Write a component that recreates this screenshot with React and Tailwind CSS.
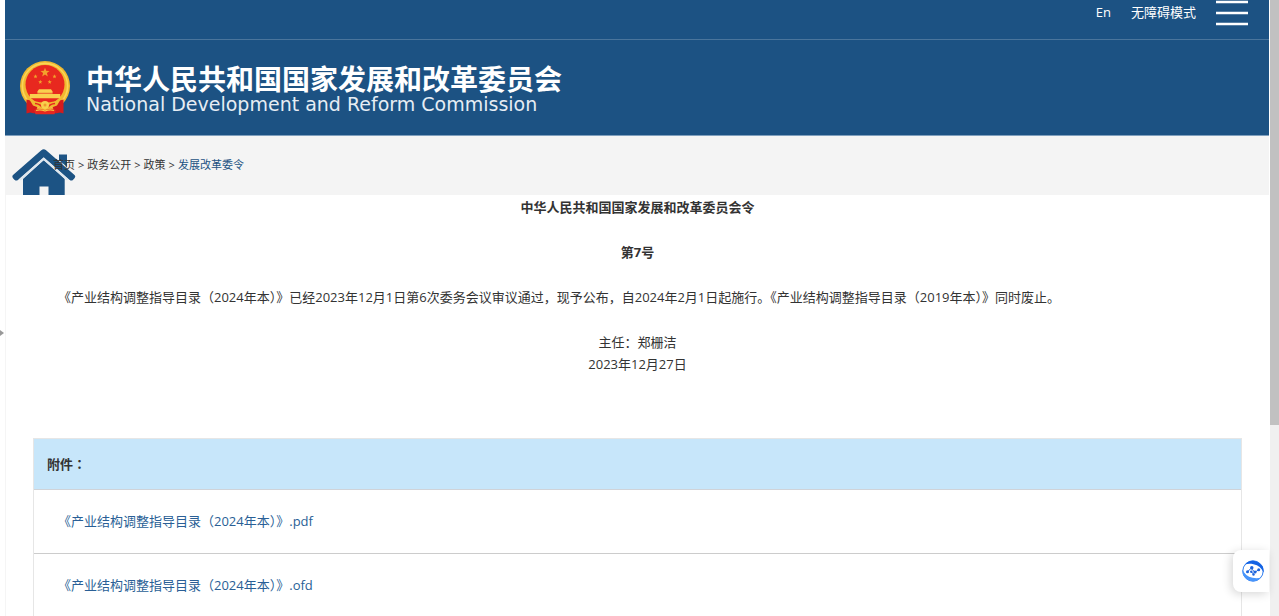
const attachments = [
  { name: '《产业结构调整指导目录（2024年本）》.pdf', href: '#pdf' },
  { name: '《产业结构调整指导目录（2024年本）》.ofd', href: '#ofd' },
];

const star = (cx, cy, r) =>
  Array.from({ length: 10 }, (_, i) => {
    const radius = i % 2 ? r * 0.42 : r;
    const a = (Math.PI / 5) * i - Math.PI / 2;
    return `${(cx + radius * Math.cos(a)).toFixed(2)},${(cy + radius * Math.sin(a)).toFixed(2)}`;
  }).join(' ');

function Emblem() {
  return (
    <svg className="h-[54px] w-[50px] shrink-0" viewBox="0 0 50 54" aria-hidden="true">
      <circle cx="25" cy="25" r="25" fill="#f0b92f" />
      <circle cx="25" cy="25" r="22.6" fill="none" stroke="#fbd458" strokeWidth="1.6" />
      <circle cx="25" cy="23.5" r="19.5" fill="#e8281f" />
      <g fill="#f3a22c">
        <polygon points={star(25, 11.5, 4.8)} />
        <polygon points={star(15.5, 15.5, 2.2)} />
        <polygon points={star(34.5, 15.5, 2.2)} />
        <polygon points={star(20.3, 21, 2.2)} />
        <polygon points={star(29.7, 21, 2.2)} />
      </g>
      <path d="M19 28.2h12l1.6 2.2v2.6h7.6v4.2H9.8V33h7.6v-2.6z" fill="#f9cf4e" />
      <path d="M17 32.3h16" stroke="#e8281f" strokeWidth=".7" />
      <path d="M6.5 38.5c4 .5 8 2.5 11.5 6.5l-3.5 7.5-4.5-1-3.5 1z" fill="#d51b1c" />
      <path d="M43.5 38.5c-4 .5-8 2.5-11.5 6.5l3.5 7.5 4.5-1 3.5 1z" fill="#d51b1c" />
      <path d="M8.5 37c4 3 9 4.5 16.5 4.500S37.500 40 41.500 37L37 44.500 25 49l-12-4.500z" fill="#f0b92f" />
      <path d="M15 42.500q5 .5 7 3.500M35 42.500q-5 .5-7 3.500" fill="none" stroke="#e8281f" strokeWidth="1.6" />
      <circle cx="25" cy="44" r="4" fill="#f9cf4e" />
      <circle cx="25" cy="44" r="1.5" fill="#ef9a2c" />
      <path d="M14 49c4-2.200 8-1.500 11 .3 3-1.800 7-2.500 11-.3l-1.500 4.300h-19z" fill="#e8281f" />
      <path d="M16 49.500c3-1.200 6-.8 9 .5 3-1.300 6-1.700 9-.5" fill="none" stroke="#f7c843" strokeWidth="1.2" />
    </svg>
  );
}

function HomeIcon() {
  return (
    <svg className="absolute bottom-0 left-[7px] h-[46px] w-16" viewBox="0 0 64 46" aria-hidden="true">
      <path d="M47 5.500h8V18l-8-7z" fill="#1c5384" />
      <path d="M31.700 11 52.700 30v17H36.500V37.500H27.500V47H11V30z" fill="#1c5384" />
      <path d="M29.300 1.200q2.400-2 4.800 0L62.500 26q1.500 1.600 0 3.200l-1.600 1.700q-1.500 1.200-3.200 0L31.700 8.200 5.900 30.900q-1.700 1.200-3.200 0L1 29.200Q-.3 27.600 1 26z" fill="#1c5384" />
      <path d="M8 30.800 31.700 10 55.500 30.800" fill="none" stroke="#dfe7ee" strokeWidth="1.8" />
    </svg>
  );
}

function AssistantIcon() {
  return (
    <svg className="size-[22px]" viewBox="0 0 22 22" aria-hidden="true">
      <circle cx="11" cy="11" r="10.2" fill="#fff" stroke="#2f7df0" strokeWidth="1" />
      <path d="M3 4.500A10.700 10.700 0 0 1 21.600 12.500C19.500 8 16.500 5.200 11.500 4.200 8 3.500 5.500 3.700 3 4.500z" fill="#1463e4" />
      <path d="M19 17.500A10.700 10.700 0 0 1 .4 9.500C2.500 14 5.500 16.800 10.500 17.800c3.500.7 6 .5 8.500-.3z" fill="#4795fb" />
      <path d="M5.500 11.800 9 8.300l4 4 3.500-2.500M9 11.500l2.500 2.500" fill="none" stroke="#1c64dc" strokeWidth="1" />
      <g fill="#1c64dc">
        <circle cx="5.5" cy="11.8" r="1.5" />
        <circle cx="9.8" cy="7.8" r="1.7" />
        <circle cx="9.3" cy="11.8" r="1.2" />
        <circle cx="13" cy="12" r="1.6" />
        <circle cx="16.7" cy="9.8" r="1.5" />
        <circle cx="11.5" cy="14.5" r="1.2" />
      </g>
    </svg>
  );
}

function Header() {
  return (
    <header className="bg-[#1c5283] text-white">
      <div className="flex h-10 items-center justify-end border-b border-[#4a759c] pr-[21px] pb-[13px]">
        <a href="#en">En</a>
        <a href="#accessible" className="ml-5">无障碍模式</a>
        <button type="button" aria-label="菜单" className="ml-5 block">
          <svg className="block h-[26px] w-8" viewBox="0 0 32 26" aria-hidden="true">
            <path d="M0 2h32M0 13h32M0 24h32" stroke="#fff" strokeWidth="2.5" />
          </svg>
        </button>
      </div>
      <div className="flex h-24 items-center border-b border-[#7f9fbd] pl-[15px]">
        <Emblem />
        <div className="ml-4 flex flex-col gap-0.5 pt-0.5">
          <h1 className="text-[28px] leading-7 font-bold">中华人民共和国国家发展和改革委员会</h1>
          <p className="font-['DejaVu_Sans',sans-serif] text-[19px] leading-[18px] text-[#e6edf4]">
            National Development and Reform Commission
          </p>
        </div>
      </div>
    </header>
  );
}

function Breadcrumb() {
  return (
    <nav aria-label="位置" className="relative flex h-[59px] items-center bg-[#f4f4f4] pl-12 text-[11px]">
      <HomeIcon />
      <ol className="relative flex gap-[3px]">
        <li><a href="#home">首页</a></li>
        <li aria-hidden="true">&gt;</li>
        <li><a href="#open">政务公开</a></li>
        <li aria-hidden="true">&gt;</li>
        <li><a href="#policy">政策</a></li>
        <li aria-hidden="true">&gt;</li>
        <li><a href="#orders" className="text-[#1c5283]">发展改革委令</a></li>
      </ol>
    </nav>
  );
}

export default function App() {
  return (
    <div className="flex h-screen overflow-hidden bg-white font-['Open_Sans','Noto_Sans_CJK_SC',sans-serif] text-[13px] text-[#333]">
      <div className="flex w-[5px] shrink-0 items-center pt-[50px]">
        <svg className="h-2 w-1" viewBox="0 0 4 8" aria-hidden="true">
          <path d="M0 1l4 3-4 3z" fill="#999" />
        </svg>
      </div>
      <div className="min-w-0 flex-1">
        <Header />
        <Breadcrumb />
        <main className="border-l border-[#f5f5f5] px-[27px] pt-px">
          <article className="flex flex-col gap-[23px] text-center leading-[22px]">
            <h2 className="font-bold">中华人民共和国国家发展和改革委员会令</h2>
            <p className="font-bold">第7号</p>
            <p className="pl-[25px] text-left">
              《产业结构调整指导目录（2024年本）》已经2023年12月1日第6次委务会议审议通过，现予公布，自2024年2月1日起施行。《产业结构调整指导目录（2019年本）》同时废止。
            </p>
            <div>
              <p>主任：郑栅洁</p>
              <p>2023年12月27日</p>
            </div>
          </article>
          <section className="mt-[63px] border border-[#e6e6e6]">
            <h3 className="flex h-[51px] items-center border-b border-[#d0d3d8] bg-[#c7e6fa] pl-[13px] font-['Noto_Sans_CJK_TC',sans-serif] font-bold">附件：</h3>
            <ul>
              {attachments.map((file) => (
                <li key={file.name} className="flex h-16 items-center border-b border-[#ccc] pl-6">
                  <a href={file.href} className="text-[#2a5f96]">{file.name}</a>
                </li>
              ))}
            </ul>
          </section>
        </main>
      </div>
      <div className="w-[10px] shrink-0 border-l border-white bg-[#f0f0f0]">
        <div className="h-[69%] bg-[#c1c1c1]" />
      </div>
      <button
        type="button"
        aria-label="助手"
        className="fixed right-[10px] bottom-6 flex h-[42px] w-9 items-center justify-center rounded-l-lg bg-white pl-1 shadow-[-2px_2px_10px_rgba(0,0,0,0.16)]"
      >
        <AssistantIcon />
      </button>
    </div>
  );
}
